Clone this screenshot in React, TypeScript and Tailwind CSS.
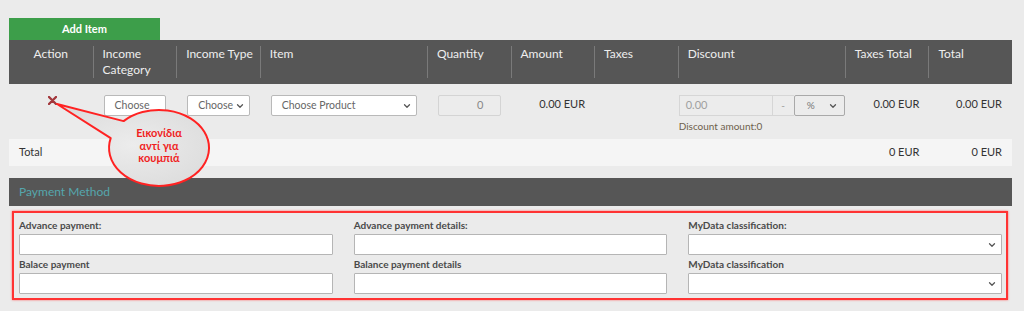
import { ChevronDown } from 'lucide-react';

function Select({ text, className = '', chevron = true }: { text: string; className?: string; chevron?: boolean }) {
  return (
    <div
      className={`h-[21px] border border-[#b9b9b9] bg-white rounded-[2px] flex items-center justify-between pl-[10px] pr-[4px] text-[10.5px] text-[#666] whitespace-nowrap ${className}`}
    >
      <span>{text}</span>
      {chevron && <ChevronDown className="w-[10px] h-[10px] text-[#555] shrink-0" strokeWidth={3} />}
    </div>
  );
}

function HeadCell({ span, first, children }: { span: string; first?: boolean; children: React.ReactNode }) {
  return (
    <div className={`${span} pt-[6px]`}>
      <div
        className={`h-[32px] leading-[16px] ${first ? 'text-center' : 'border-l border-[#7a7a7a] pl-[9px]'}`}
      >
        {children}
      </div>
    </div>
  );
}

function Field({ label, select }: { label: string; select?: boolean }) {
  return (
    <div>
      <div className="text-[10px] font-bold text-[#4a4a4a] leading-[14px] h-[16px]">{label}</div>
      <div className="h-[21px] border border-[#b5b5b5] bg-white rounded-[1px] flex items-center justify-end pr-[4px]">
        {select && <ChevronDown className="w-[10px] h-[10px] text-[#555]" strokeWidth={3} />}
      </div>
    </div>
  );
}

export default function App() {
  return (
    <div className="relative min-h-screen bg-[#ebebeb] font-['Lato',sans-serif] pt-[18px]">
      <div className="ml-[9px] w-[1003px]">
        <div className="w-[151px] h-[22px] bg-[#3d9e4a] text-white text-[11px] font-bold flex items-center justify-center">
          Add Item
        </div>

        <div className="grid grid-cols-12 h-[44px] bg-[#565656] text-[12px] text-[#eeeeee]">
          <HeadCell span="col-span-1" first>Action</HeadCell>
          <HeadCell span="col-span-1">Income<br />Category</HeadCell>
          <HeadCell span="col-span-1">Income Type</HeadCell>
          <HeadCell span="col-span-2">Item</HeadCell>
          <HeadCell span="col-span-1">Quantity</HeadCell>
          <HeadCell span="col-span-1">Amount</HeadCell>
          <HeadCell span="col-span-1">Taxes</HeadCell>
          <HeadCell span="col-span-2">Discount</HeadCell>
          <HeadCell span="col-span-1">Taxes Total</HeadCell>
          <HeadCell span="col-span-1">Total</HeadCell>
        </div>

        <div className="grid grid-cols-12 h-[55px] pt-[11px] text-[11px] text-[#333]">
          <div className="col-span-1 flex justify-center pl-[4px] pt-[1px]">
            <svg width="9" height="9" viewBox="0 0 9 9">
              <path d="M1 1 L8 8 M8 1 L1 8" stroke="#a3383d" strokeWidth="2.4" strokeLinecap="round" />
            </svg>
          </div>
          <div className="col-span-1 pl-[11px] pr-[10px]">
            <Select text="Choose" chevron={false} />
          </div>
          <div className="col-span-1 pl-[11px] pr-[10px]">
            <Select text="Choose" />
          </div>
          <div className="col-span-2 pl-[11px] pr-[10px]">
            <Select text="Choose Product" />
          </div>
          <div className="col-span-1 pl-[11px] pr-[10px]">
            <div className="h-[21px] border border-[#d4d4d4] bg-[#ececec] rounded-[2px] flex items-center justify-end pr-[16px] text-[11px] text-[#888]">
              0
            </div>
          </div>
          <div className="col-span-1 text-right pr-[9px] pt-[1px]">0.00 EUR</div>
          <div className="col-span-1" />
          <div className="col-span-2 pl-[1px]">
            <div className="flex h-[21px]">
              <div className="w-[94px] border border-[#d6d6d6] bg-[#ececec] flex items-center pl-[6px] text-[11px] text-[#a0a0a0]">
                0.00
              </div>
              <div className="w-[21px] border-y border-[#d6d6d6] bg-[#ececec] flex items-center justify-center text-[10px] text-[#999]">
                -
              </div>
              <div className="flex-1 border border-[#a9a9a9] rounded-[2px] bg-[#ececec] flex items-center pl-[12px] pr-[6px] text-[10px] text-[#777]">
                <span className="flex-1">%</span>
                <ChevronDown className="w-[10px] h-[10px] text-[#555]" strokeWidth={3} />
              </div>
            </div>
            <div className="mt-[3px] text-[10px] text-[#6e5f4c] leading-[14px]">Discount amount:0</div>
          </div>
          <div className="col-span-1 text-right pr-[9px] pt-[1px]">0.00 EUR</div>
          <div className="col-span-1 text-right pr-[10px] pt-[1px]">0.00 EUR</div>
        </div>

        <div className="grid grid-cols-12 h-[27px] bg-[#f5f5f5] items-center text-[11px] text-[#333]">
          <div className="col-span-10 pl-[10px]">Total</div>
          <div className="col-span-1 text-right pr-[9px]">0 EUR</div>
          <div className="col-span-1 text-right pr-[10px]">0 EUR</div>
        </div>

        <div className="mt-[12px] h-[28px] bg-[#565656] flex items-center pl-[10px] text-[12px] text-[#55a6ad]">
          Payment Method
        </div>
      </div>

      <div className="ml-[12px] mt-[5px] w-[996px] border-2 border-[#f33] shadow-[0_0_2px_#f66] pl-[5px] pr-[4px] pt-[5px] pb-[4px] grid grid-cols-3 gap-x-[21px]">
        <div className="flex flex-col gap-[2px]">
          <Field label="Advance payment:" />
          <Field label="Balace payment" />
        </div>
        <div className="flex flex-col gap-[2px]">
          <Field label="Advance payment details:" />
          <Field label="Balance payment details" />
        </div>
        <div className="flex flex-col gap-[2px]">
          <Field label="MyData classification:" select />
          <Field label="MyData classification" select />
        </div>
      </div>

      <svg className="absolute left-0 top-0 pointer-events-none" width="1024" height="311" viewBox="0 0 1024 311">
        <defs>
          <radialGradient id="bubble" cx="0.5" cy="0.5" r="0.6">
            <stop offset="0" stopColor="#ececec" />
            <stop offset="1" stopColor="#dcdcdc" />
          </radialGradient>
        </defs>
        <path
          d="M 123.6 121.1 L 57 104 L 110.7 138.2 A 50 38 0 1 0 123.6 121.1 Z"
          fill="url(#bubble)"
          stroke="#f22"
          strokeWidth="2"
          strokeLinejoin="round"
        />
      </svg>
      <div className="absolute left-[109px] top-[127px] w-[100px] text-center text-[11px] font-bold leading-[12.5px] text-[#f01e1e]">
        Εικονίδια
        <br />
        αντί για
        <br />
        κουμπιά
      </div>
    </div>
  );
}
